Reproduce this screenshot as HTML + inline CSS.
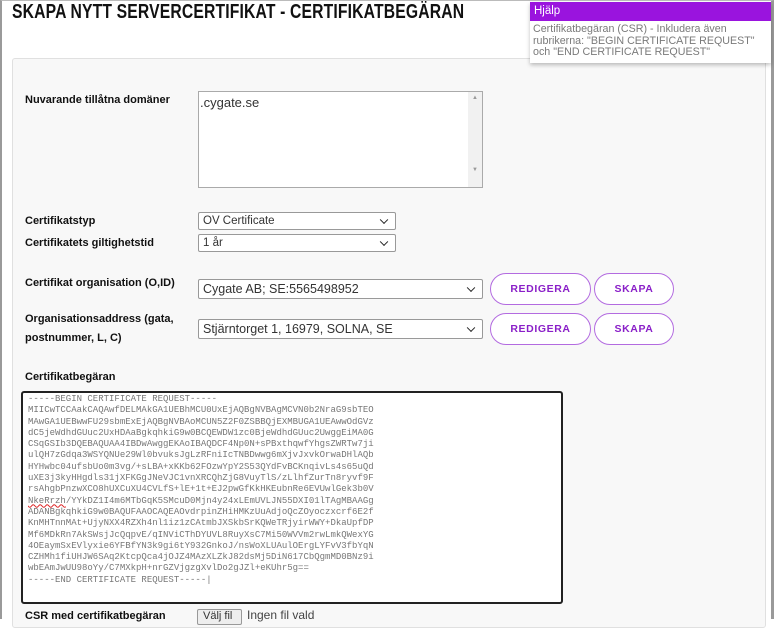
<!DOCTYPE html>
<html><head><meta charset="utf-8">
<style>
*{margin:0;padding:0;box-sizing:border-box}
body{width:774px;height:619px;overflow:hidden;background:#fff;font-family:"Liberation Sans",Arial,sans-serif;position:relative}
.frame{position:absolute;left:0;top:0;width:774px;height:619px;border-left:2px solid #9a9a9a;border-right:3px solid #9a9a9a;border-top:1px solid #bbb}
.title{position:absolute;left:12px;top:1px;font-size:20px;font-weight:bold;color:#111;white-space:nowrap;transform:scaleX(0.785);transform-origin:0 0;letter-spacing:0.2px}
.panel{position:absolute;left:12px;top:58px;width:754px;height:570px;background:#f8f8f8;border:1px solid #e0e0e0;border-radius:3px}
.help{position:absolute;left:530px;top:2px;width:241px;height:61px;background:#fff;box-shadow:0 2px 4px rgba(0,0,0,.25);z-index:5}
.help .h{background:#9a14de;color:#fff;font-size:11.5px;height:19px;line-height:19px;padding-left:4px}
.help .b{color:#7a7a7a;font-size:10.7px;line-height:11.5px;padding:3px 3px;white-space:nowrap}
.lbl{position:absolute;left:25px;font-size:11px;font-weight:bold;color:#111;line-height:20px}
.ta1{position:absolute;left:198px;top:91px;width:285px;height:97px;background:#fff;border:1px solid #aaa}
.ta1 span{position:absolute;left:1px;top:3px;font-size:13px;color:#333}
.sb{position:absolute;right:0;top:0;width:14px;height:95px;background:#f1f1f1;font-size:6px;color:#999;text-align:center}
.sel{position:absolute;background:#fff;border:1px solid #999;border-radius:2px;color:#333;padding-left:4px;white-space:nowrap}
.sel:after{content:"";position:absolute;right:8px;top:50%;width:5px;height:5px;border-right:1.5px solid #222;border-bottom:1.5px solid #222;transform:translateY(-70%) rotate(45deg)}
.btn{position:absolute;height:32px;border:1.5px solid #b36be0;border-radius:16px;background:#fff;color:#8a1fc8;font-size:10.5px;font-weight:bold;letter-spacing:.6px;text-align:center;line-height:31px}
.ta2{position:absolute;left:21px;top:391px;width:542px;height:213px;background:#fff;border:2px solid #222;border-radius:3px}
.ta2 pre{position:absolute;left:5px;top:1px;font-family:"Liberation Mono",monospace;font-size:9px;line-height:11.3px;color:#777}
.file{position:absolute;left:197px;top:609px;width:45px;height:16px;border:1px solid #999;background:#eee;font-size:11px;color:#333;padding-left:5px;border-radius:2px}
</style></head><body>
<div class="panel"></div>
<div class="title">SKAPA NYTT SERVERCERTIFIKAT - CERTIFIKATBEGÄRAN</div>
<div class="help"><div class="h">Hjälp</div><div class="b">Certifikatbegäran (CSR) - Inkludera även<br>rubrikerna: "BEGIN CERTIFICATE REQUEST"<br>och "END CERTIFICATE REQUEST"</div></div>

<div class="lbl" style="top:90px">Nuvarande tillåtna domäner</div>
<div class="ta1"><span>.cygate.se</span><div class="sb"><div style="margin-top:3px">▲</div><div style="margin-top:66px">▼</div></div></div>

<div class="lbl" style="top:211px">Certifikatstyp</div>
<div class="sel" style="left:198px;top:212px;width:198px;height:18px;font-size:11.5px;line-height:16px">OV Certificate</div>
<div class="lbl" style="top:233px">Certifikatets giltighetstid</div>
<div class="sel" style="left:198px;top:234px;width:198px;height:18px;font-size:11.5px;line-height:16px">1 år</div>

<div class="lbl" style="top:273px">Certifikat organisation (O,ID)</div>
<div class="sel" style="left:198px;top:279px;width:285px;height:20px;font-size:12.5px;line-height:18px">Cygate AB; SE:5565498952</div>
<div class="btn" style="left:490px;top:273px;width:101px">REDIGERA</div>
<div class="btn" style="left:594px;top:273px;width:80px">SKAPA</div>

<div class="lbl" style="top:310px;line-height:19px">Organisationsaddress (gata,<br>postnummer, L, C)</div>
<div class="sel" style="left:198px;top:319px;width:285px;height:20px;font-size:12.5px;line-height:18px">Stjärntorget 1, 16979, SOLNA, SE</div>
<div class="btn" style="left:490px;top:313px;width:101px">REDIGERA</div>
<div class="btn" style="left:594px;top:313px;width:80px">SKAPA</div>

<div class="lbl" style="top:367px">Certifikatbegäran</div>
<div class="ta2"><pre>-----BEGIN CERTIFICATE REQUEST-----
MIICwTCCAakCAQAwfDELMAkGA1UEBhMCU0UxEjAQBgNVBAgMCVN0b2NraG9sbTEO
MAwGA1UEBwwFU29sbmExEjAQBgNVBAoMCUN5Z2F0ZSBBQjEXMBUGA1UEAwwOdGVz
dC5jeWdhdGUuc2UxHDAaBgkqhkiG9w0BCQEWDW1zc0BjeWdhdGUuc2UwggEiMA0G
CSqGSIb3DQEBAQUAA4IBDwAwggEKAoIBAQDCF4Np0N+sPBxthqwfYhgsZWRTw7ji
ulQH7zGdqa3WSYQNUe29Wl0bvuksJgLzRFniIcTNBDwwg6mXjvJxvkOrwaDHlAQb
HYHwbc04ufsbUo0m3vg/+sLBA+xKKb62FOzwYpY2S53QYdFvBCKnqivLs4s65uQd
uXE3j3kyHHgdls31jXFKGgJNeVJC1vnXRCQhZjG8VuyTlS/zLlhfZurTn8ryvf9F
rsAhgbPnzwXCO8hUXCuXU4CVLfS+lE+1t+EJ2pwGfKkHKEubnRe6EVUwlGek3b0V
<span style="text-decoration:underline wavy #d22">NkeRrzh</span>/YYkDZ1I4m6MTbGqK5SMcuD0Mjn4y24xLEmUVLJN55DXI01lTAgMBAAGg
ADANBgkqhkiG9w0BAQUFAAOCAQEAOvdrpinZHiHMKzUuAdjoQcZOyoczxcrf6E2f
KnMHTnnMAt+UjyNXX4RZXh4nl1iz1zCAtmbJXSkbSrKQWeTRjyirWWY+DkaUpfDP
Mf6MDkRn7AkSWsjJcQqpvE/qINViCThDYUVL8RuyXsC7Mi50WVVm2rwLmkQWexYG
4OEaymSxEVlyxie6YFBfYN3k9gi6tY932GnkoJ/nsWoXLUAulOErgLYFvV3fbYqN
CZHMh1fiUHJW6SAq2KtcpQca4jOJZ4MAzXLZkJ82dsMj5DiN617CbQgmMD0BNz9i
wbEAmJwUU98oYy/C7MXkpH+nrGZVjgzgXvlDo2gJZl+eKUhr5g==
-----END CERTIFICATE REQUEST-----|</pre></div>

<div class="lbl" style="top:606px">CSR med certifikatbegäran</div>
<div class="file">Välj fil</div>
<div style="position:absolute;left:247px;top:608px;font-size:12px;color:#444">Ingen fil vald</div>
<div class="frame"></div>
</body></html>
